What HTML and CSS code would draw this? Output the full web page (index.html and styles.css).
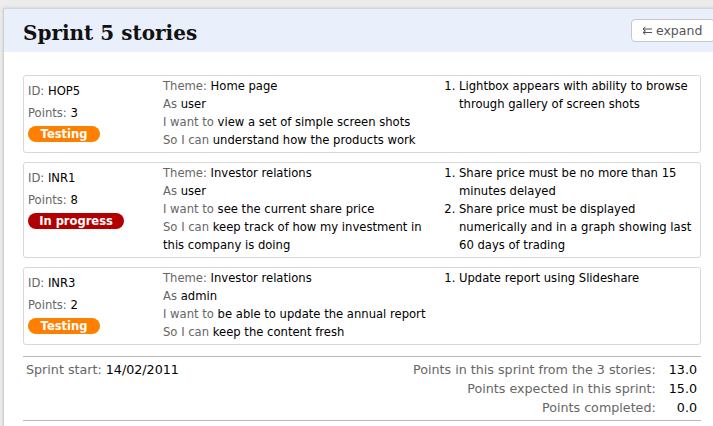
FILE: index.html
```html
<!DOCTYPE html>
<html lang="en">
<head>
  <meta charset="UTF-8">
  <title>Sprint 5 stories</title>
  <link rel="stylesheet" href="styles.css">
</head>
<body>
  <div class="panel">
    <div class="panel-head">
      <h1>Sprint 5 stories</h1>
      <button class="expand-btn">
        <svg width="11" height="9" viewBox="0 0 11 9"><path d="M1 3h9M1 6.5h9M3.5 0.8L1 3l2.5 2.2M3.5 4.3L1 6.5l2.5 2.2" fill="none" stroke="#555" stroke-width="1"/></svg>
        expand
      </button>
    </div>
    <div class="panel-body">
      <div class="story">
        <div class="story-meta">
          <p><span class="lbl">ID:</span> HOP5</p>
          <p><span class="lbl">Points:</span> 3</p>
          <span class="badge testing">Testing</span>
        </div>
        <div class="story-text">
          <div><span class="lbl">Theme:</span> Home page</div>
          <div><span class="lbl">As</span> user</div>
          <div><span class="lbl">I want to</span> view a set of simple screen shots</div>
          <div><span class="lbl">So I can</span> understand how the products work</div>
        </div>
        <ol class="criteria">
          <li>Lightbox appears with ability to browse through gallery of screen shots</li>
        </ol>
      </div>
      <div class="story">
        <div class="story-meta">
          <p><span class="lbl">ID:</span> INR1</p>
          <p><span class="lbl">Points:</span> 8</p>
          <span class="badge progress">In progress</span>
        </div>
        <div class="story-text">
          <div><span class="lbl">Theme:</span> Investor relations</div>
          <div><span class="lbl">As</span> user</div>
          <div><span class="lbl">I want to</span> see the current share price</div>
          <div><span class="lbl">So I can</span> keep track of how my investment in this company is doing</div>
        </div>
        <ol class="criteria">
          <li>Share price must be no more than 15 minutes delayed</li>
          <li>Share price must be displayed numerically and in a graph showing last 60 days of trading</li>
        </ol>
      </div>
      <div class="story">
        <div class="story-meta">
          <p><span class="lbl">ID:</span> INR3</p>
          <p><span class="lbl">Points:</span> 2</p>
          <span class="badge testing">Testing</span>
        </div>
        <div class="story-text">
          <div><span class="lbl">Theme:</span> Investor relations</div>
          <div><span class="lbl">As</span> admin</div>
          <div><span class="lbl">I want to</span> be able to update the annual report</div>
          <div><span class="lbl">So I can</span> keep the content fresh</div>
        </div>
        <ol class="criteria">
          <li>Update report using Slideshare</li>
        </ol>
      </div>

      <div class="summary">
        <div class="sprint-start"><span class="lbl">Sprint start:</span> 14/02/2011</div>
        <table class="totals">
          <tr><td class="lbl">Points in this sprint from the 3 stories:</td><td>13.0</td></tr>
          <tr><td class="lbl">Points expected in this sprint:</td><td>15.0</td></tr>
          <tr><td class="lbl">Points completed:</td><td>0.0</td></tr>
        </table>
      </div>
    </div>
  </div>
</body>
</html>
```

FILE: styles.css
```css
body {
  margin: 0;
  padding: 8px 0 0 3px;
  background-color: #ececec;
  font-family: "DejaVu Sans", Verdana, sans-serif;
  font-size: 11.6px;
  color: #000;
  overflow: hidden;
}
.panel {
  background: white;
  border-left: 1px solid #d0d0d0;
  border-top: 1px solid #d6d6d6;
  box-shadow: 0 0 3px rgba(0, 0, 0, 0.15);
  width: 740px;
  min-height: 430px;
}
.panel-head {
  background-color: #eaf0fb;
  height: 43px;
  display: flex;
  align-items: center;
  padding-left: 19px;
}
h1 {
  margin: 0;
  font-family: "DejaVu Serif", Georgia, serif;
  font-size: 20px;
  font-weight: bold;
  color: #111;
  flex: 1;
  padding-top: 5px;
}
.expand-btn {
  margin-right: 29px;
  height: 23px;
  width: 84px;
  background: white;
  border: 1px solid #c8c8c8;
  border-radius: 4px;
  font-family: "DejaVu Sans", Verdana, sans-serif;
  font-size: 12.5px;
  color: #555;
  text-align: left;
  padding: 0 0 0 10px;
  display: flex;
  align-items: center;
  gap: 3px;
}
.panel-body {
  padding: 23px 0 0 19px;
  width: 678px;
}
.story {
  display: grid;
  grid-template-columns: 135px 278px 1fr;
  border: 1px solid #d8d8d8;
  border-radius: 3px;
  padding: 1px 0 3px 4px;
  margin-bottom: 9px;
  line-height: 18px;
}
.lbl {
  color: #666;
}
.story-meta p {
  margin: 5px 0 0;
  line-height: 18px;
}
.story-meta p + p {
  margin-top: 4px;
}
.badge {
  display: inline-block;
  margin-top: 4px;
  height: 16px;
  line-height: 16px;
  border-radius: 8px;
  color: white;
  font-weight: bold;
  font-size: 11.5px;
  text-align: center;
}
.testing {
  background-color: #ff7f00;
  width: 72px;
}
.progress {
  background-color: #b20000;
  width: 96px;
}
.criteria {
  margin: 0;
  padding: 0 6px 0 18px;
}
.summary {
  margin-top: 11px;
  border-top: 1px solid #bbb;
  border-bottom: 1px solid #bbb;
  display: flex;
  justify-content: space-between;
  padding: 3px 0 4px 3px;
  height: 56px;
  line-height: 19px;
  font-size: 12.7px;
}
.totals {
  border-collapse: collapse;
  margin-right: 4px;
}
.totals td {
  padding: 0;
  text-align: right;
}
.totals td + td {
  padding-left: 13px;
}
```
